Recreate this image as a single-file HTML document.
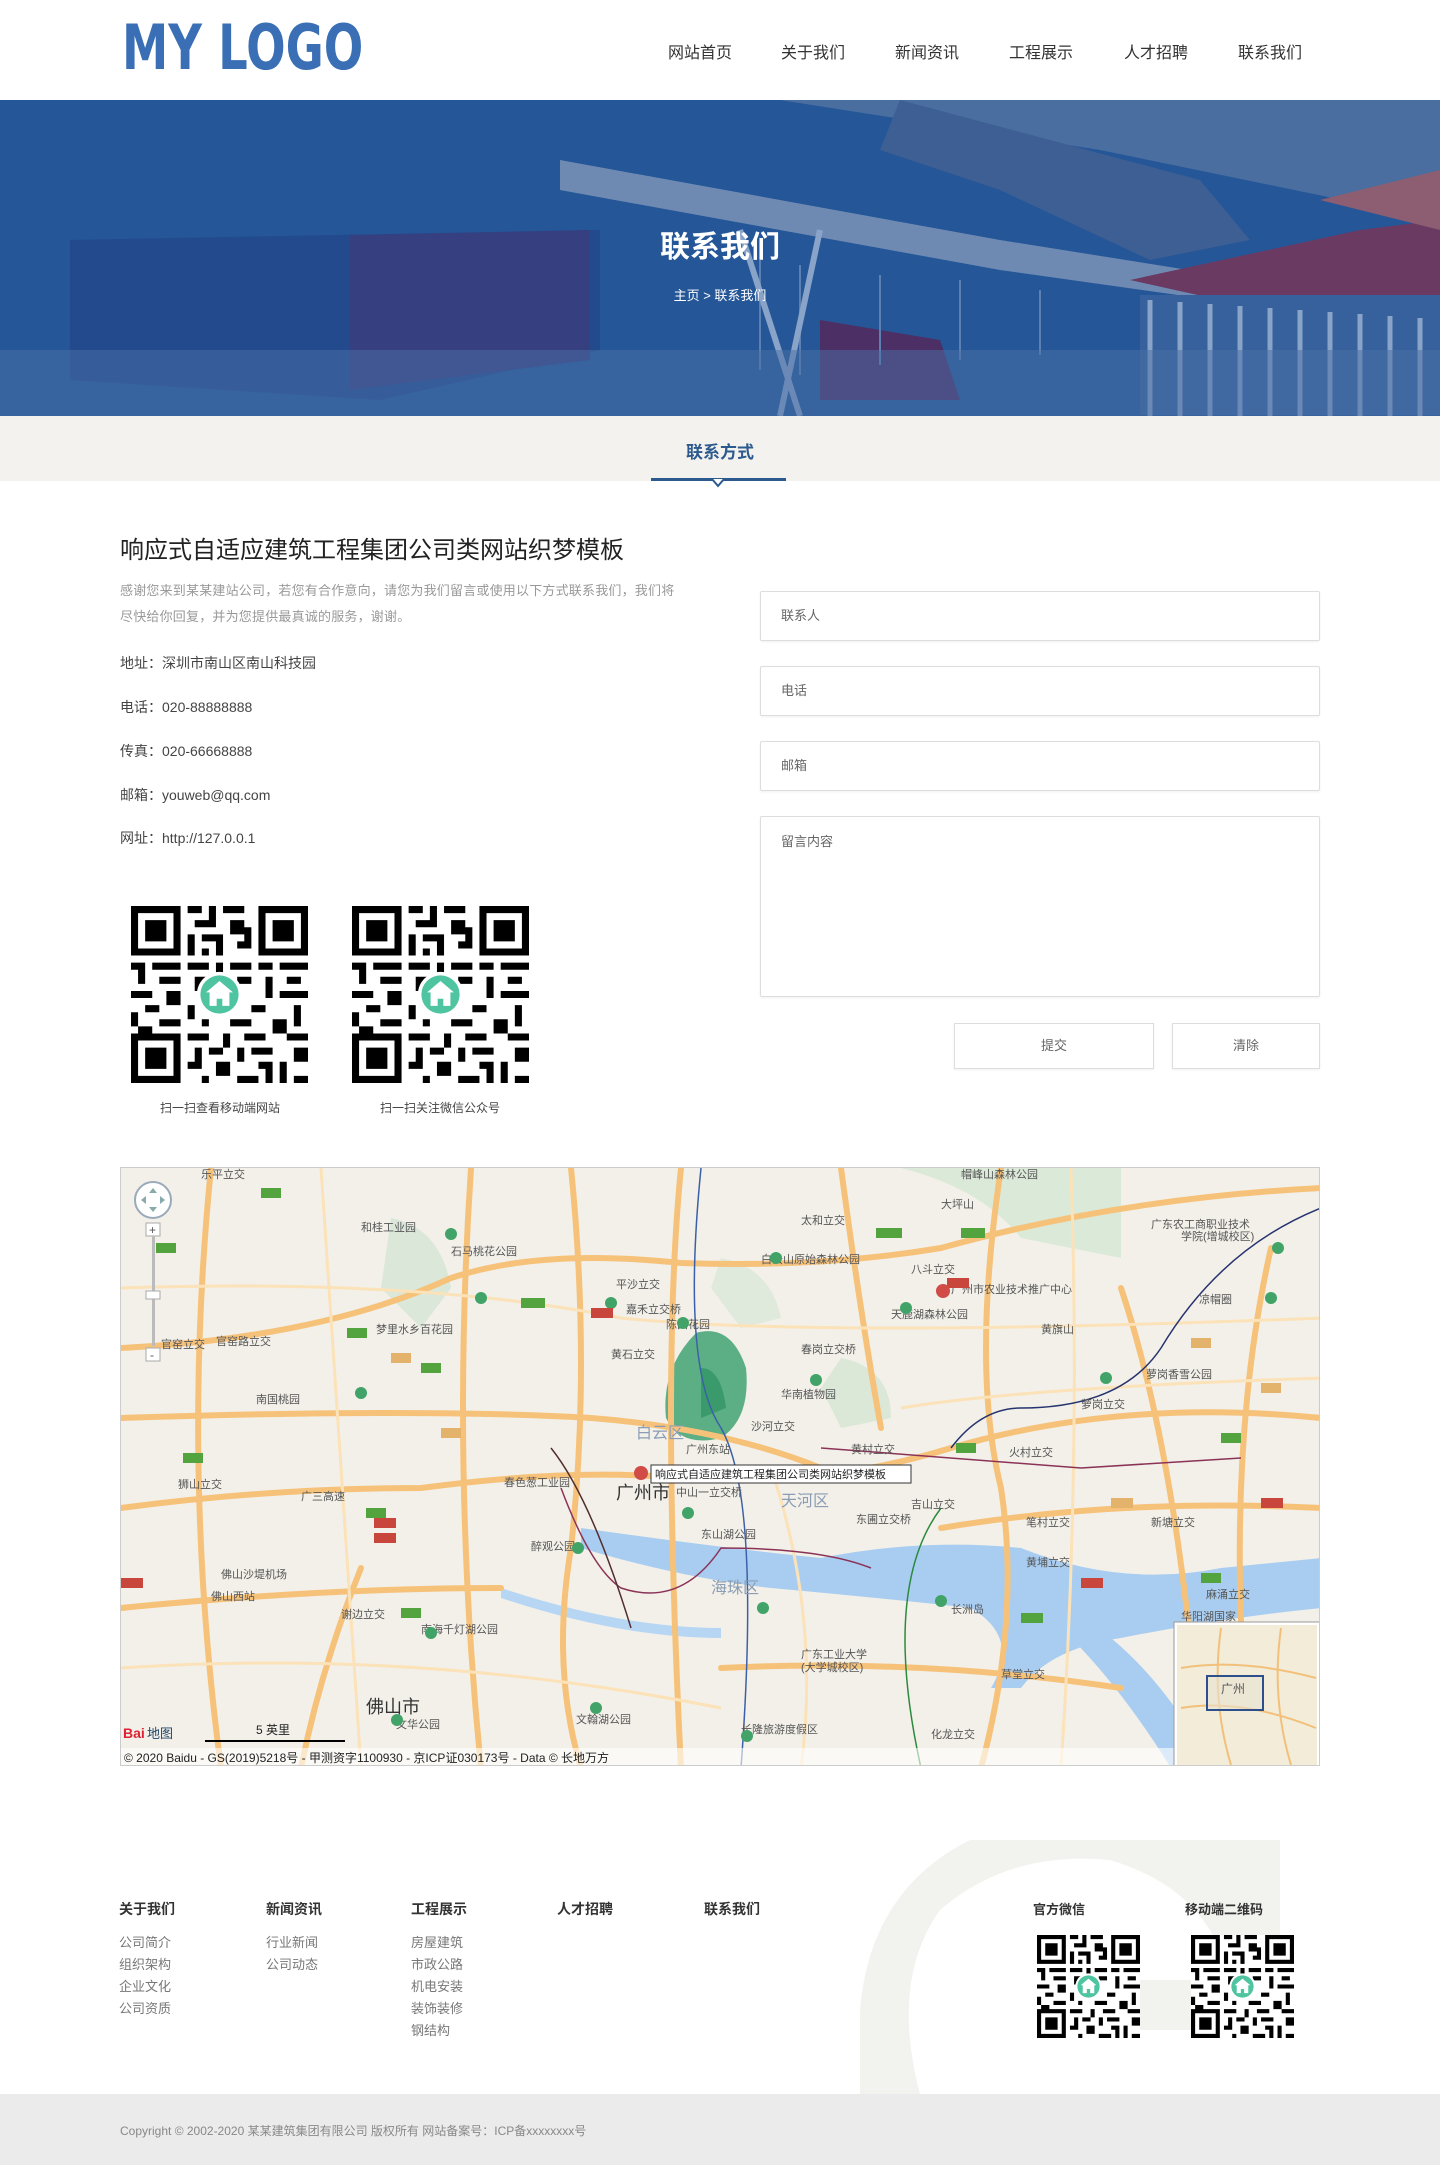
<!DOCTYPE html>
<html lang="zh">
<head>
<meta charset="utf-8">
<style>
*{margin:0;padding:0;box-sizing:border-box}
body{width:1440px;height:2165px;background:#fff;font-family:"Liberation Sans","Noto Sans CJK SC",sans-serif;color:#333;position:relative;overflow:hidden}
.abs{position:absolute}
.header{left:0;top:0;width:1440px;height:100px;background:#fff}
.logo{left:122px;top:12px;font-family:"DejaVu Sans","Liberation Sans",sans-serif;font-weight:bold;font-size:62px;color:#3a6fb5;letter-spacing:0;transform:scaleX(0.75);transform-origin:left top;line-height:72px;white-space:nowrap}
.nav a{position:absolute;top:39px;font-size:16px;color:#333;text-decoration:none;white-space:nowrap;transform:translateX(-50%)}
.banner{left:0;top:100px;width:1440px;height:316px;overflow:hidden;background:#1d4f96}
.tabbar{left:0;top:416px;width:1440px;height:65px;background:#f3f2ee}
.content-h{left:120px;top:530px;font-size:24px;color:#222}
.desc{left:120px;top:578px;width:560px;font-size:13px;color:#999;line-height:26px;letter-spacing:0.2px}
.info{left:120px;font-size:14px;color:#444}
.field{left:760px;width:560px;border:1px solid #ddd;border-radius:2px;background:#fff;box-shadow:0 1px 2px rgba(0,0,0,.06);font-size:13px;color:#666;padding-left:20px}
.btn{height:46px;top:1023px;border:1px solid #ddd;background:#fff;font-size:13px;color:#666;text-align:center;line-height:44px;box-shadow:0 1px 2px rgba(0,0,0,.06)}
.cap{font-size:12px;color:#444;top:1099px;width:200px;text-align:center}
.fh{top:1899px;font-size:14px;font-weight:bold;color:#333}
.fl{font-size:13px;color:#777;line-height:22px}
.copy{left:0;top:2094px;width:1440px;height:71px;background:#ebebeb}
</style>
</head>
<body>
<svg width="0" height="0" style="position:absolute">
<defs>
<symbol id="qr" viewBox="0 0 25 25">
<rect width="25" height="25" fill="#fff"/>
<path fill="#000" d="M0 0h7v7h-7zM1 1v5h5v-5zM2 2h3v3h-3zM18 0h7v7h-7zM19 1v5h5v-5zM20 2h3v3h-3zM0 18h7v7h-7zM1 19v5h5v-5zM2 20h3v3h-3z
M8 0h2v1h-2zM11 0h1v2h-1zM13 0h3v1h-3zM9 2h3v1h-3zM14 2h2v2h-2zM8 4h1v3h-1zM10 4h3v1h-3zM12 5h1v2h-1zM15 5h2v1h-2zM10 6h1v1h-1zM16 3h1v2h-1z
M0 8h2v1h-2zM3 8h4v1h-4zM8 8h3v1h-3zM12 8h1v2h-1zM14 8h3v1h-3zM18 8h2v1h-2zM21 8h4v1h-4zM1 9h1v2h-1zM4 10h3v1h-3zM9 10h2v2h-2zM15 10h2v1h-2zM19 10h1v3h-1zM22 10h2v1h-2zM0 12h3v1h-3zM5 12h2v2h-2zM13 12h1v2h-1zM21 12h4v1h-4zM2 14h2v1h-2zM8 14h1v2h-1zM17 14h2v1h-2zM23 14h1v3h-1zM0 15h1v2h-1zM4 16h3v1h-3zM10 16h1v1h-1zM14 16h3v1h-3zM20 16h2v2h-2zM1 17h2v1h-2z
M8 18h3v1h-3zM13 18h1v2h-1zM16 18h3v1h-3zM22 18h3v1h-3zM9 20h1v3h-1zM11 20h2v1h-2zM15 20h1v2h-1zM17 20h3v1h-3zM23 20h2v2h-2zM8 22h1v1h-1zM12 22h2v2h-2zM18 22h2v1h-2zM21 22h1v3h-1zM10 24h1v1h-1zM15 24h3v1h-3zM23 24h2v1h-2zM19 23h1v2h-1z"/>
<circle cx="12.5" cy="12.5" r="3.2" fill="#fff"/>
<circle cx="12.5" cy="12.5" r="2.7" fill="#4fc4a0"/>
<path fill="#fff" d="M12.5 10.6l-1.9 1.6h.5v1.9h1v-1h.8v1h1v-1.9h.5z"/>
</symbol>
</defs>
</svg>

<div class="abs header"></div>
<div class="abs logo">MY&nbsp;LOGO</div>
<div class="nav">
<a style="left:700px">网站首页</a><a style="left:813px">关于我们</a><a style="left:927px">新闻资讯</a><a style="left:1041px">工程展示</a><a style="left:1156px">人才招聘</a><a style="left:1270px">联系我们</a>
</div>

<div class="abs banner">
<svg width="1440" height="316" viewBox="0 0 1440 316">
<rect width="1440" height="316" fill="#1f5296"/>
<rect x="0" y="0" width="1440" height="316" fill="#2a5a9a" opacity=".5"/>
<polygon points="780,0 1440,0 1440,120 1100,50" fill="#4a6e9f"/>
<polygon points="900,0 1050,40 1200,80 1250,140 1150,160 1000,90 880,50" fill="#3d5f94"/>
<polygon points="560,60 1000,140 1440,210 1440,232 1000,170 560,90" fill="#6f8ab2"/>
<polygon points="1130,180 1360,130 1440,120 1440,210 1220,200" fill="#6b3a63"/>
<polygon points="1320,100 1440,70 1440,130" fill="#8d5d72"/>
<polygon points="70,140 600,130 600,250 380,300 70,280" fill="#234a8c"/>
<polygon points="350,135 590,130 590,260 350,290" fill="#363f80"/>
<polygon points="820,220 940,240 960,300 820,300" fill="#4c2f64"/>
<rect x="1140" y="195" width="300" height="120" fill="#36619d"/>
<g stroke="#8aa3c8" stroke-width="5">
<line x1="1150" y1="200" x2="1150" y2="316"/><line x1="1180" y1="202" x2="1180" y2="316"/><line x1="1210" y1="204" x2="1210" y2="316"/><line x1="1240" y1="206" x2="1240" y2="316"/><line x1="1270" y1="208" x2="1270" y2="316"/><line x1="1300" y1="210" x2="1300" y2="316"/><line x1="1330" y1="212" x2="1330" y2="316"/><line x1="1360" y1="214" x2="1360" y2="316"/><line x1="1390" y1="216" x2="1390" y2="316"/><line x1="1420" y1="218" x2="1420" y2="316"/>
</g>
<g stroke="#5d80b3" stroke-width="2">
<line x1="760" y1="160" x2="760" y2="270"/><line x1="800" y1="165" x2="800" y2="275"/><line x1="880" y1="175" x2="880" y2="265"/><line x1="960" y1="180" x2="960" y2="260"/><line x1="1040" y1="190" x2="1040" y2="255"/>
</g>
<line x1="740" y1="130" x2="800" y2="316" stroke="#8aa3c8" stroke-width="6"/>
<line x1="820" y1="130" x2="780" y2="316" stroke="#8aa3c8" stroke-width="6"/>
<rect x="0" y="250" width="1440" height="66" fill="#4a6fa5" opacity=".5"/>
</svg>
<div class="abs" style="left:0;top:122px;width:1440px;text-align:center;font-size:30px;font-weight:bold;color:#fff">联系我们</div>
<div class="abs" style="left:0;top:185px;width:1440px;text-align:center;font-size:13px;color:#fff">主页 &gt; 联系我们</div>
</div>

<div class="abs tabbar"></div>
<div class="abs" style="left:0;top:438px;width:1440px;text-align:center;font-size:17px;font-weight:bold;color:#2d5a8e">联系方式</div>
<div class="abs" style="left:651px;top:478px;width:135px;height:3px;background:#2d5a8e"></div>
<svg class="abs" style="left:710px;top:478px" width="16" height="10"><path d="M2 1l6 7 6-7" fill="#fff" stroke="#2d5a8e" stroke-width="2"/></svg>

<div class="abs content-h">响应式自适应建筑工程集团公司类网站织梦模板</div>
<div class="abs desc">感谢您来到某某建站公司，若您有合作意向，请您为我们留言或使用以下方式联系我们，我们将尽快给你回复，并为您提供最真诚的服务，谢谢。</div>
<div class="abs info" style="top:653px">地址：深圳市南山区南山科技园</div>
<div class="abs info" style="top:697px">电话：020-88888888</div>
<div class="abs info" style="top:741px">传真：020-66668888</div>
<div class="abs info" style="top:785px">邮箱：youweb@qq.com</div>
<div class="abs info" style="top:828px">网址：http://127.0.0.1</div>

<svg class="abs" style="left:131px;top:906px" width="177" height="177"><use href="#qr"/></svg>
<svg class="abs" style="left:352px;top:906px" width="177" height="177"><use href="#qr"/></svg>
<div class="abs cap" style="left:120px">扫一扫查看移动端网站</div>
<div class="abs cap" style="left:340px">扫一扫关注微信公众号</div>

<div class="abs field" style="top:591px;height:50px;line-height:48px">联系人</div>
<div class="abs field" style="top:666px;height:50px;line-height:48px">电话</div>
<div class="abs field" style="top:741px;height:50px;line-height:48px">邮箱</div>
<div class="abs field" style="top:816px;height:181px;padding-top:14px">留言内容</div>
<div class="abs btn" style="left:954px;width:200px">提交</div>
<div class="abs btn" style="left:1172px;width:148px">清除</div>

<div class="abs" style="left:120px;top:1167px;width:1200px;height:599px;border:1px solid #ccc;overflow:hidden;background:#f4f1ea">
<svg width="1200" height="600" viewBox="0 0 1200 600" font-family="Liberation Sans,Noto Sans CJK SC,sans-serif" font-size="11" fill="#555">
<rect width="1200" height="600" fill="#f3f0e9"/>
<path d="M780 0 Q860 20 900 70 L1000 90 L1000 0z" fill="#dbe9d8"/>
<path d="M270 50 Q320 60 330 120 L300 160 L260 120z" fill="#dbe7d9"/>
<path d="M600 90 Q650 100 660 150 L620 160 L590 120z" fill="#dfeadc"/>
<path d="M720 190 Q770 200 770 250 L720 260 L700 220z" fill="#dbe8d8"/>
<path d="M575 165 Q610 155 625 200 Q630 250 600 270 Q560 280 545 250 Q540 200 575 165z" fill="#5cae84"/>
<path d="M580 200 Q600 200 605 240 L580 250z" fill="#3b9a6b"/>
<path d="M460 360 Q600 380 700 390 Q800 370 900 380 Q1000 420 1100 400 L1200 390 L1200 440 Q1100 450 1000 470 Q930 480 900 520 L870 520 Q900 470 850 440 Q760 430 650 420 Q560 410 460 380z" fill="#a9cdf0"/>
<path d="M950 470 Q1000 520 1050 600 L1090 600 Q1050 520 990 470z" fill="#a9cdf0"/>
<path d="M380 420 Q500 460 600 460 L600 470 Q500 470 380 430z" fill="#b7d6f3"/>
<g fill="none" stroke="#f6c27a" stroke-width="6" stroke-linecap="round">
<path d="M0 180 Q200 170 330 110 Q420 80 560 95 Q700 100 820 80 Q1000 30 1200 20"/>
<path d="M0 340 Q150 320 300 320 Q450 300 560 310 Q700 320 830 280 Q1000 230 1200 250"/>
<path d="M0 440 Q200 420 380 420"/>
<path d="M820 360 Q1000 330 1200 340"/>
<path d="M560 0 Q540 200 560 600"/>
<path d="M450 0 Q470 200 450 380 Q430 500 460 600"/>
<path d="M350 0 Q330 300 360 600"/>
<path d="M90 0 Q60 300 100 600"/>
<path d="M880 0 Q850 200 880 320 Q900 450 860 600"/>
<path d="M1000 120 Q1060 300 1080 600"/>
<path d="M240 400 Q200 500 180 600"/>
<path d="M720 0 Q740 150 760 260"/>
<path d="M1150 80 Q1100 300 1130 600"/>
<path d="M0 250 Q300 240 470 250 Q600 260 700 300"/>
<path d="M600 500 Q800 490 1000 520"/>
</g>
<g fill="none" stroke="#fbe2b8" stroke-width="3">
<path d="M0 120 Q300 110 500 150 Q700 170 1200 150"/>
<path d="M0 500 Q300 480 600 540"/>
<path d="M200 0 Q220 300 240 600"/>
<path d="M650 300 Q700 450 680 600"/>
<path d="M950 0 Q960 300 940 600"/>
<path d="M780 240 Q900 220 1200 210"/>
</g>
<g fill="none" stroke-width="1.5">
<path d="M580 0 Q560 200 600 260 Q640 330 620 600" stroke="#3a61a7"/>
<path d="M1200 40 Q1100 80 1040 180 Q1000 240 900 240 Q860 240 830 280" stroke="#26336f"/>
<path d="M700 280 L960 300 L1120 290" stroke="#8b3357"/>
<path d="M440 320 Q470 400 500 420 Q560 440 600 380 Q700 380 750 400" stroke="#8b3357"/>
<path d="M820 340 Q760 420 800 600" stroke="#2c8a3d"/>
<path d="M430 280 Q470 330 510 460" stroke="#532e2e"/>
</g>
<circle cx="520" cy="305" r="7" fill="#d14b47"/>
<rect x="530" y="297" width="260" height="18" fill="#fff" stroke="#333"/>
<text x="534" y="310" fill="#222">响应式自适应建筑工程集团公司类网站织梦模板</text>
<text x="495" y="331" font-size="18" fill="#333">广州市</text>
<text x="555" y="328">中山一立交桥</text>
<text x="660" y="338" font-size="16" fill="#8a9db4">天河区</text>
<text x="590" y="425" font-size="16" fill="#8a9db4">海珠区</text>
<text x="515" y="270" font-size="16" fill="#8a9db4">白云区</text>
<text x="245" y="545" font-size="18" fill="#333">佛山市</text>
<text x="630" y="262">沙河立交</text><text x="565" y="285">广州东站</text><text x="730" y="285">黄村立交</text><text x="888" y="288">火村立交</text>
<text x="680" y="185">春岗立交桥</text><text x="490" y="190">黄石立交</text><text x="505" y="145">嘉禾立交桥</text><text x="495" y="120">平沙立交</text>
<text x="680" y="56">太和立交</text><text x="790" y="105">八斗立交</text><text x="830" y="125">广州市农业技术推广中心</text>
<text x="40" y="180">官窑立交</text><text x="95" y="177">官窑路立交</text><text x="330" y="87">石马桃花公园</text><text x="255" y="165">梦里水乡百花园</text>
<text x="135" y="235">南国桃园</text><text x="57" y="320">狮山立交</text><text x="180" y="332">广三高速</text><text x="383" y="318">春色葱工业园</text>
<text x="580" y="370">东山湖公园</text><text x="410" y="382">醉观公园</text><text x="100" y="410">佛山沙堤机场</text><text x="90" y="432">佛山西站</text>
<text x="220" y="450">谢边立交</text><text x="300" y="465">南海千灯湖公园</text><text x="790" y="340">吉山立交</text><text x="905" y="358">笔村立交</text>
<text x="1030" y="358">新塘立交</text><text x="905" y="398">黄埔立交</text><text x="735" y="355">东圃立交桥</text><text x="830" y="445">长洲岛</text>
<text x="680" y="490">广东工业大学</text><text x="680" y="503">(大学城校区)</text><text x="880" y="510">草堂立交</text><text x="810" y="570">化龙立交</text>
<text x="620" y="565">长隆旅游度假区</text><text x="455" y="555">文翰湖公园</text><text x="275" y="560">文华公园</text>
<text x="1030" y="60">广东农工商职业技术</text><text x="1060" y="72">学院(增城校区)</text><text x="1025" y="210">萝岗香雪公园</text><text x="960" y="240">萝岗立交</text>
<text x="1085" y="430">麻涌立交</text><text x="1060" y="452">华阳湖国家</text><text x="240" y="63">和桂工业园</text><text x="80" y="10">乐平立交</text>
<text x="1078" y="135">凉帽圈</text><text x="920" y="165">黄旗山</text><text x="820" y="40">大坪山</text><text x="840" y="10">帽峰山森林公园</text><text x="770" y="150">天鹿湖森林公园</text>
<text x="640" y="95">白云山原始森林公园</text><text x="545" y="160">陈田花园</text><text x="660" y="230">华南植物园</text>
<g fill="#41a367"><circle cx="330" cy="66" r="6"/><circle cx="360" cy="130" r="6"/><circle cx="490" cy="135" r="6"/><circle cx="562" cy="155" r="6"/><circle cx="655" cy="90" r="6"/><circle cx="785" cy="140" r="6"/><circle cx="695" cy="212" r="6"/><circle cx="985" cy="210" r="6"/><circle cx="1150" cy="130" r="6"/><circle cx="1157" cy="80" r="6"/><circle cx="240" cy="225" r="6"/><circle cx="567" cy="345" r="6"/><circle cx="457" cy="380" r="6"/><circle cx="310" cy="465" r="6"/><circle cx="276" cy="552" r="6"/><circle cx="475" cy="540" r="6"/><circle cx="626" cy="568" r="6"/><circle cx="820" cy="433" r="6"/><circle cx="642" cy="440" r="6"/></g>
<g fill="#53a33f"><rect x="140" y="20" width="20" height="10"/><rect x="35" y="75" width="20" height="10"/><rect x="400" y="130" width="24" height="10"/><rect x="226" y="160" width="20" height="10"/><rect x="300" y="195" width="20" height="10"/><rect x="62" y="285" width="20" height="10"/><rect x="245" y="340" width="20" height="10"/><rect x="835" y="275" width="20" height="10"/><rect x="1080" y="405" width="20" height="10"/><rect x="840" y="60" width="24" height="10"/><rect x="755" y="60" width="26" height="10"/><rect x="280" y="440" width="20" height="10"/><rect x="900" y="445" width="22" height="10"/><rect x="1100" y="265" width="20" height="10"/></g>
<g fill="#c9463d"><rect x="470" y="140" width="22" height="10"/><rect x="826" y="110" width="22" height="10"/><rect x="253" y="350" width="22" height="10"/><rect x="253" y="365" width="22" height="10"/><rect x="1140" y="330" width="22" height="10"/><rect x="960" y="410" width="22" height="10"/><rect x="0" y="410" width="22" height="10"/></g>
<g fill="#e3b36b"><rect x="270" y="185" width="20" height="10"/><rect x="320" y="260" width="20" height="10"/><rect x="1070" y="170" width="20" height="10"/><rect x="1140" y="215" width="20" height="10"/><rect x="990" y="330" width="22" height="10"/></g>
<circle cx="822" cy="123" r="7" fill="#d14b47"/>
<circle cx="32" cy="32" r="18" fill="#fff" stroke="#9ab" stroke-width="2"/>
<path d="M32 20l-4 5h8zM32 44l-4-5h8zM20 32l5-4v8zM44 32l-5-4v8z" fill="#8aa"/>
<rect x="25" y="55" width="14" height="13" fill="#fff" stroke="#aaa"/><text x="28" y="66" font-size="12">+</text>
<rect x="31" y="68" width="3" height="110" fill="#bbb"/>
<rect x="25" y="123" width="14" height="8" fill="#fff" stroke="#aaa"/>
<rect x="25" y="180" width="14" height="13" fill="#fff" stroke="#aaa"/><text x="29" y="191" font-size="12">-</text>
<rect x="0" y="580" width="1200" height="20" fill="#fff" opacity=".6"/>
<text x="3" y="594" font-size="12" fill="#222">© 2020 Baidu - GS(2019)5218号 - 甲测资字1100930 - 京ICP证030173号 - Data © 长地万方</text>
<text x="2" y="570" font-size="14" font-weight="bold" fill="#d23">Bai</text><text x="26" y="570" font-size="13" fill="#246">地图</text>
<rect x="84" y="572" width="140" height="2" fill="#000"/><text x="135" y="566" font-size="12" fill="#222">5 英里</text>
<rect x="1053" y="454" width="146" height="146" fill="#fff" stroke="#999"/>
<rect x="1056" y="457" width="140" height="140" fill="#f2ecd9"/>
<g fill="none" stroke="#f2c07a" stroke-width="2"><path d="M1060 500Q1120 490 1195 510M1060 540Q1120 530 1195 560M1100 460Q1090 530 1110 597M1160 460Q1150 530 1170 597"/></g>
<rect x="1086" y="508" width="56" height="34" fill="#e7e2d0" fill-opacity=".6" stroke="#2d4f8c" stroke-width="2"/>
<text x="1100" y="525" font-size="12">广州</text>
</svg>
</div>

<svg class="abs" style="left:850px;top:1830px" width="460" height="264" viewBox="0 0 460 264">
<path d="M120 10 Q20 60 10 180 L10 264 L70 264 Q40 150 90 80 Q160 20 260 30 Q360 60 380 150 L200 150 L200 200 L430 200 L430 10z" fill="#f2f2ee"/>
</svg>
<div class="abs fh" style="left:119px">关于我们</div>
<div class="abs fh" style="left:266px">新闻资讯</div>
<div class="abs fh" style="left:411px">工程展示</div>
<div class="abs fh" style="left:557px">人才招聘</div>
<div class="abs fh" style="left:704px">联系我们</div>
<div class="abs fh" style="left:1033px;font-size:13px">官方微信</div>
<div class="abs fh" style="left:1185px;font-size:13px">移动端二维码</div>
<div class="abs fl" style="left:119px;top:1932px">公司简介<br>组织架构<br>企业文化<br>公司资质</div>
<div class="abs fl" style="left:266px;top:1932px">行业新闻<br>公司动态</div>
<div class="abs fl" style="left:411px;top:1932px">房屋建筑<br>市政公路<br>机电安装<br>装饰装修<br>钢结构</div>
<svg class="abs" style="left:1037px;top:1935px" width="103" height="103"><use href="#qr"/></svg>
<svg class="abs" style="left:1191px;top:1935px" width="103" height="103"><use href="#qr"/></svg>

<div class="abs copy"></div>
<div class="abs" style="left:120px;top:2122px;font-size:12px;color:#888">Copyright © 2002-2020 某某建筑集团有限公司 版权所有 网站备案号：ICP备xxxxxxxx号</div>
</body>
</html>
